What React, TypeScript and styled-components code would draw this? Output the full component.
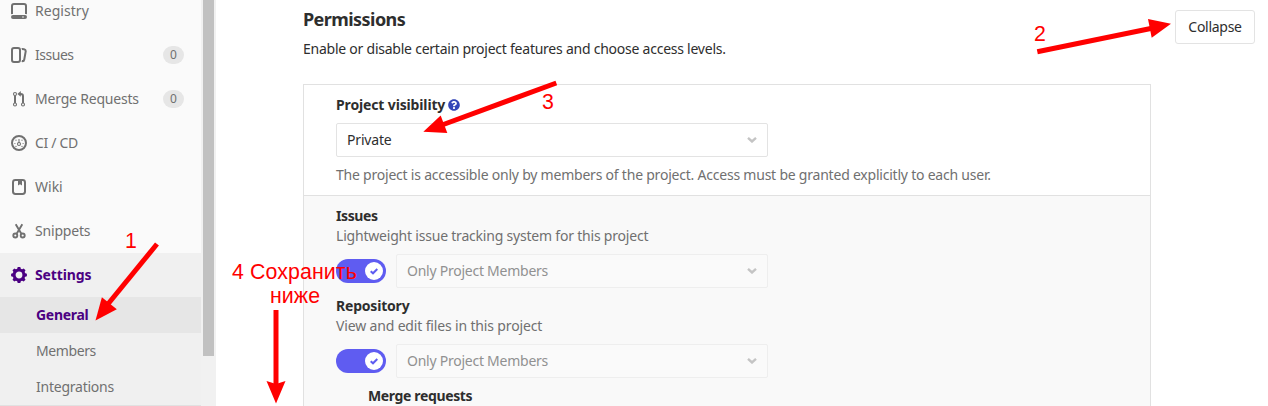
import React from "react";
import styled, { createGlobalStyle } from "styled-components";
import { FaQuestionCircle } from "react-icons/fa";

const GlobalStyle = createGlobalStyle`
  *, *::before, *::after { box-sizing: border-box; }
  body {
    margin: 0;
    overflow: hidden;
    background: #fff;
    color: #2e2e2e;
    font: 14px/20px "Noto Sans", "Open Sans", sans-serif;
  }
  svg { display: block; flex: none; }
`;

const Page = styled.div`
  position: relative;
  display: flex;
  height: 406px;
  overflow: hidden;
`;

const Label = styled.span<{ $track?: number }>`
  white-space: nowrap;
  letter-spacing: ${(p) => p.$track ?? -0.2}px;
`;

/* ---------- sidebar ---------- */

const Sidebar = styled.aside`
  display: flex;
  flex: none;
  width: 216px;
  overflow: hidden;
`;

const Nav = styled.nav`
  width: 201px;
  margin-top: -11px;
  background: #fafafa;
  color: #707070;
`;

const NavItem = styled.a<{ $active?: boolean }>`
  display: flex;
  align-items: center;
  gap: 8px;
  height: 44px;
  padding: 0 17px 0 11px;
  background: ${(p) => (p.$active ? "#f0f0f0" : "transparent")};
  color: ${(p) => (p.$active ? "#4b0082" : "#707070")};
  font-weight: ${(p) => (p.$active ? 700 : 400)};
`;

const Count = styled.span`
  display: flex;
  align-items: center;
  justify-content: center;
  width: 21px;
  height: 18px;
  margin-left: auto;
  border-radius: 9px;
  background: #e6e6e6;
  font-size: 12px;
`;

const SubNav = styled.div`
  border-bottom: 1px solid #e1e1e1;
  background: #f0f0f0;
`;

const SubItem = styled.a<{ $active?: boolean }>`
  display: flex;
  align-items: center;
  height: 36px;
  padding-left: 36px;
  background: ${(p) => (p.$active ? "#e6e6e6" : "transparent")};
  color: ${(p) => (p.$active ? "#4b0082" : "#707070")};
  font-weight: ${(p) => (p.$active ? 700 : 400)};
`;

const ScrollTrack = styled.div`
  width: 15px;
  padding: 0 2px;
  background: #f1f1f1;
`;

const ScrollThumb = styled.div`
  height: 356px;
  background: #c1c1c1;
`;

/* ---------- content ---------- */

const Main = styled.main`
  flex: 1;
  padding: 6px 13px 0 87px;
`;

const Header = styled.header`
  display: flex;
  justify-content: space-between;
  align-items: flex-start;
  height: 78px;
`;

const Title = styled.h4`
  margin: 0 0 7px;
  font-size: 18px;
  line-height: 26px;
`;

const Button = styled.button`
  width: 80px;
  height: 34px;
  margin-top: 4px;
  padding: 0;
  border: 1px solid #e3e3e3;
  border-radius: 3px;
  background: #fff;
  color: #2e2e2e;
  font: inherit;
`;

const Panel = styled.section`
  width: 848px;
  border: 1px solid #e1e1e1;
`;

const VisibilityRow = styled.div`
  height: 110px;
  padding: 10px 32px 0;
`;

const FeatureArea = styled.div`
  height: 240px;
  padding: 10px 32px 0;
  border-top: 1px solid #e1e1e1;
  background: #f9f9f9;
`;

const Feature = styled.div`
  height: 90px;
`;

const NestedFeature = styled.div`
  padding-left: 32px;
`;

const FieldTitle = styled.div`
  display: flex;
  align-items: center;
  gap: 3px;
  height: 20px;
  font-weight: 700;
`;

const Help = styled(FaQuestionCircle)`
  width: 12px;
  height: 12px;
  color: #3446b8;
`;

const Hint = styled.div`
  height: 20px;
  color: #707070;
`;

const Controls = styled.div`
  display: flex;
  align-items: center;
  gap: 10px;
  margin-top: 8px;
`;

const Select = styled.div<{ $disabled?: boolean }>`
  display: flex;
  flex: none;
  align-items: center;
  justify-content: space-between;
  width: ${(p) => (p.$disabled ? 372 : 432)}px;
  height: 34px;
  padding: 0 10px;
  border: 1px solid ${(p) => (p.$disabled ? "#eeeeee" : "#e3e3e3")};
  border-radius: 2px;
  background: ${(p) => (p.$disabled ? "#fafafa" : "#fff")};
  color: ${(p) => (p.$disabled ? "#919191" : "#2e2e2e")};
`;

const VisibilitySelect = styled(Select)`
  margin: 8px 0;
`;

const Toggle = styled.div`
  display: flex;
  align-items: center;
  justify-content: flex-end;
  width: 50px;
  height: 24px;
  padding: 3px;
  border-radius: 12px;
  background: #5f5cf1;
`;

const Knob = styled.div`
  display: flex;
  align-items: center;
  justify-content: center;
  width: 18px;
  height: 18px;
  border-radius: 50%;
  background: #fff;
  color: #5f5cf1;
`;

/* ---------- annotations drawn over the page ---------- */

const Arrows = styled.svg`
  position: absolute;
  inset: 0;
  fill: #f00;
  stroke: #f00;
  pointer-events: none;
`;

const Note = styled.div<{ $x: number; $y: number }>`
  position: absolute;
  left: ${(p) => p.$x}px;
  top: ${(p) => p.$y}px;
  transform: translateX(-50%);
  color: #f00;
  font: 21.33px/24px "Liberation Sans", Arial, sans-serif;
  letter-spacing: 0.1px;
  white-space: nowrap;
`;

/* ---------- icons ---------- */

const Icon = ({ children }: { children: React.ReactNode }) => (
  <svg width="16" height="16" viewBox="0 0 16 16" fill="currentColor">
    {children}
  </svg>
);

const RegistryIcon = () => (
  <Icon>
    <path fillRule="evenodd" d="M3 0h10a3 3 0 0 1 3 3v8.2a3 3 0 0 0-1.5-.2H14V3a1 1 0 0 0-1-1H3a1 1 0 0 0-1 1v8h-.5a3 3 0 0 0-1.5.2V3a3 3 0 0 1 3-3z" />
    <path fillRule="evenodd" d="M2 12h12a2 2 0 1 1 0 4H2a2 2 0 1 1 0-4zm10 1.2a.8.8 0 1 0 0 1.6.8.8 0 0 0 0-1.6z" />
  </Icon>
);

const IssuesIcon = () => (
  <Icon>
    <path fillRule="evenodd" d="M10.458 15.012l.311.055a3 3 0 0 0 3.476-2.433l1.389-7.879A3 3 0 0 0 13.2 1.28L11.23.933a3.002 3.002 0 0 0-.824-.031c.364.59.58 1.28.593 2.02l1.854.328a1 1 0 0 1 .811 1.158l-1.389 7.879a1 1 0 0 1-1.158.81l-.118-.02a3.98 3.98 0 0 1-.541 1.935zM3 0h4a3 3 0 0 1 3 3v10a3 3 0 0 1-3 3H3a3 3 0 0 1-3-3V3a3 3 0 0 1 3-3zm0 2a1 1 0 0 0-1 1v10a1 1 0 0 0 1 1h4a1 1 0 0 0 1-1V3a1 1 0 0 0-1-1H3z" />
  </Icon>
);

const MergeIcon = () => (
  <Icon>
    <g fill="none" stroke="currentColor">
      <circle cx="4" cy="3" r="1.5" strokeWidth="1.1" />
      <circle cx="4" cy="13.5" r="1.5" strokeWidth="1.1" />
      <circle cx="12" cy="13.5" r="1.5" strokeWidth="1.1" />
      <path d="M4 4.6v7.4" strokeWidth="2" />
      <path d="M12 12V5.2A2.2 2.2 0 0 0 9.8 3H9" strokeWidth="2" />
    </g>
    <path d="M6.4 2.9L9.8 0v5.8z" />
  </Icon>
);

const PipelineIcon = () => (
  <Icon>
    <circle cx="8" cy="8" r="7" fill="none" stroke="currentColor" strokeWidth="2" />
    <path d="M7.5 4h1v4h-1z" />
    <circle cx="8" cy="9" r="1.5" fill="none" stroke="currentColor" strokeWidth="1.1" />
    <circle cx="3.9" cy="8.5" r=".6" />
    <circle cx="12.1" cy="8.5" r=".6" />
    <circle cx="5" cy="5.2" r=".6" />
    <circle cx="11" cy="5.2" r=".6" />
    <circle cx="5" cy="11.4" r=".6" />
    <circle cx="11" cy="11.4" r=".6" />
  </Icon>
);

const WikiIcon = () => (
  <Icon>
    <rect x="2" y="1" width="12" height="14" rx="2.4" fill="none" stroke="currentColor" strokeWidth="2" />
    <path d="M7 2h4v4.6L9 5.2 7 6.6z" />
  </Icon>
);

const SnippetsIcon = () => (
  <Icon>
    <g fill="none" stroke="currentColor">
      <circle cx="4.3" cy="12.5" r="2" strokeWidth="1.9" />
      <circle cx="11.7" cy="12.5" r="2" strokeWidth="1.9" />
      <path d="M5.8 10.6L11.3 1.3M10.2 10.6L4.7 1.3" strokeWidth="1.9" />
    </g>
  </Icon>
);

const SettingsIcon = () => (
  <Icon>
    <circle cx="8" cy="8" r="4.9" fill="none" stroke="currentColor" strokeWidth="3" />
    {[0, 45, 90, 135, 180, 225, 270, 315].map((angle) => (
      <path key={angle} d="M6 2.6L6.7.1h2.6l.7 2.5z" transform={`rotate(${angle} 8 8)`} />
    ))}
  </Icon>
);

const Chevron = () => (
  <svg width="10" height="6" viewBox="0 0 10 6" fill="none" stroke="#c4c4c4" strokeWidth="2.4">
    <path d="M1 .9l4 3.6L9 .9" />
  </svg>
);

const Check = () => (
  <svg width="8" height="7" viewBox="0 0 8 7" fill="none" stroke="currentColor" strokeWidth="2">
    <path d="M.7 3.2L3 5.3 7.3 1" />
  </svg>
);

/* ---------- data ---------- */

const navItems = [
  { text: "Registry", track: 0.04, icon: <RegistryIcon /> },
  { text: "Issues", track: -0.48, icon: <IssuesIcon />, count: 0 },
  { text: "Merge Requests", track: -0.2, icon: <MergeIcon />, count: 0 },
  { text: "CI / CD", track: -0.34, icon: <PipelineIcon /> },
  { text: "Wiki", track: 0, icon: <WikiIcon /> },
  { text: "Snippets", track: -0.18, icon: <SnippetsIcon /> },
  { text: "Settings", track: -0.12, icon: <SettingsIcon />, active: true },
];

const subItems = [
  { text: "General", track: -0.3, active: true },
  { text: "Members", track: -0.4 },
  { text: "Integrations", track: -0.24 },
];

const features = [
  { title: "Issues", titleTrack: -0.4, hint: "Lightweight issue tracking system for this project", hintTrack: -0.205 },
  { title: "Repository", titleTrack: -0.2, hint: "View and edit files in this project", hintTrack: -0.155 },
];

export default function App() {
  return (
    <>
      <GlobalStyle />
      <Page>
        <Sidebar>
          <Nav>
            {navItems.map((item) => (
              <NavItem key={item.text} $active={item.active}>
                {item.icon}
                <Label $track={item.track}>{item.text}</Label>
                {item.count !== undefined && <Count>{item.count}</Count>}
              </NavItem>
            ))}
            <SubNav>
              {subItems.map((item) => (
                <SubItem key={item.text} $active={item.active}>
                  <Label $track={item.track}>{item.text}</Label>
                </SubItem>
              ))}
            </SubNav>
          </Nav>
          <ScrollTrack>
            <ScrollThumb />
          </ScrollTrack>
        </Sidebar>

        <Main>
          <Header>
            <div>
              <Title>
                <Label $track={-0.56}>Permissions</Label>
              </Title>
              <Label $track={-0.24}>Enable or disable certain project features and choose access levels.</Label>
            </div>
            <Button>
              <Label $track={-0.28}>Collapse</Label>
            </Button>
          </Header>

          <Panel>
            <VisibilityRow>
              <FieldTitle>
                <Label $track={-0.14}>Project visibility</Label>
                <Help />
              </FieldTitle>
              <VisibilitySelect>
                <Label $track={-0.18}>Private</Label>
                <Chevron />
              </VisibilitySelect>
              <Hint>
                <Label $track={-0.218}>
                  The project is accessible only by members of the project. Access must be granted explicitly to each user.
                </Label>
              </Hint>
            </VisibilityRow>
            <FeatureArea>
              {features.map((feature) => (
                <Feature key={feature.title}>
                  <FieldTitle>
                    <Label $track={feature.titleTrack}>{feature.title}</Label>
                  </FieldTitle>
                  <Hint>
                    <Label $track={feature.hintTrack}>{feature.hint}</Label>
                  </Hint>
                  <Controls>
                    <Toggle>
                      <Knob>
                        <Check />
                      </Knob>
                    </Toggle>
                    <Select $disabled>
                      <Label $track={-0.25}>Only Project Members</Label>
                      <Chevron />
                    </Select>
                  </Controls>
                </Feature>
              ))}
              <NestedFeature>
                <FieldTitle>
                  <Label $track={-0.36}>Merge requests</Label>
                </FieldTitle>
              </NestedFeature>
            </FeatureArea>
          </Panel>
        </Main>

        <Arrows width="1268" height="406" viewBox="0 0 1268 406">
          <g strokeWidth="5">
            <path d="M157 244L108 304" />
            <path d="M1037.3 51.7L1152 28.3" />
            <path d="M556.3 83L442 125" />
            <path d="M276 310V384" />
          </g>
          <g stroke="none">
            <path d="M95.5 320.5L101.9 297.2 116.8 309.3z" />
            <path d="M1171 23.8L1148 19 1151.7 37.8z" />
            <path d="M423.3 131.8L440.7 115.5 447.3 133z" />
            <path d="M276 403.5L266.5 381 276 384 285.5 381z" />
          </g>
        </Arrows>
        <Note $x={131} $y={229}>1</Note>
        <Note $x={1040} $y={22}>2</Note>
        <Note $x={548} $y={90}>3</Note>
        <Note $x={294.5} $y={260}>4 Сохранить</Note>
        <Note $x={295} $y={284}>ниже</Note>
      </Page>
    </>
  );
}
